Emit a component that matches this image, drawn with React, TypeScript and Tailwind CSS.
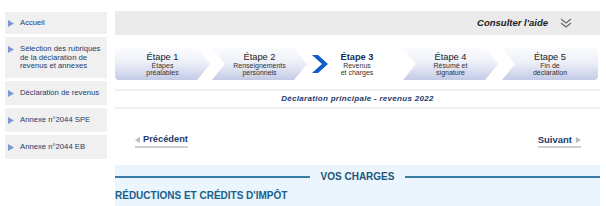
import React from 'react'

const FONT = { fontFamily: '"Liberation Sans", Arial, sans-serif' }

const MENU = [
  { lines: ['Accueil'], h: 'h-[22px]' },
  { lines: ['Sélection des rubriques', 'de la déclaration de', 'revenus et annexes'], h: 'h-[41px]' },
  { lines: ['Déclaration de revenus'], h: 'h-[24px]' },
  { lines: ['Annexe n°2044 SPE'], h: 'h-[24px]' },
  { lines: ['Annexe n°2044 EB'], h: 'h-[24px]' },
]

// step background: rounded left or notched left, pointed right or rounded right
function StepShape({ notch, point, id }: { notch?: boolean; point?: boolean; id: string }) {
  const W = 96, H = 32, d = 13
  let path = ''
  if (notch) path += `M0 0 L${d} ${H / 2} L0 ${H} `
  else path += `M4 0 Q0 0 0 4 L0 ${H - 4} Q0 ${H} 4 ${H} `
  if (point) path += `L${W - d} ${H} L${W} ${H / 2} L${W - d} 0 Z`
  else path += `L${W - 4} ${H} Q${W} ${H} ${W} ${H - 4} L${W} 4 Q${W} 0 ${W - 4} 0 Z`
  return (
    <svg className="absolute inset-0 w-full h-full" viewBox={`0 0 ${W} ${H}`} preserveAspectRatio="none">
      <defs>
        <linearGradient id={id} x1="0" y1="0" x2="0" y2="1">
          <stop offset="0" stopColor="#fbfcfe" />
          <stop offset="0.45" stopColor="#eef0f8" />
          <stop offset="1" stopColor="#c3cae6" />
        </linearGradient>
      </defs>
      <path d={path} fill={`url(#${id})`} />
    </svg>
  )
}

function Step({ n, sub, notch, point, w, className = '' }: {
  n: number; sub: string[]; notch?: boolean; point?: boolean; w: string; className?: string
}) {
  return (
    <div className={`relative h-[32px] ${w} ${className} flex flex-col items-center justify-center`}>
      <StepShape notch={notch} point={point} id={`g${n}`} />
      <span className="relative text-[9.3px] leading-[10px] text-[#222]">Étape {n}</span>
      {sub.map(s => (
        <span key={s} className="relative text-[7px] leading-[7px] text-[#333]">{s}</span>
      ))}
    </div>
  )
}

export default function App() {
  return (
    <div style={FONT} className="w-[606px] h-[206px] overflow-hidden bg-white flex">
      {/* left menu */}
      <div className="w-[107px] pl-[5px] pt-[12px] flex flex-col gap-[3px] shrink-0">
        {MENU.map(m => (
          <div key={m.lines[0]} className={`${m.h} bg-[#f0f0f0] flex pl-[2px] ${m.lines.length > 1 ? 'items-start pt-[8px]' : 'items-center'}`}>
            <svg width="6" height="7" viewBox="0 0 6 7" className="shrink-0 ml-[1px] mt-[1px]">
              <path d="M0 0 L6 3.5 L0 7 Z" fill="#7d97d3" />
            </svg>
            <div className="ml-[6px] flex flex-col whitespace-nowrap">
              {m.lines.map(l => (
                <span key={l} className="text-[7.7px] leading-[8.7px] text-[#1d3b6b]">{l}</span>
              ))}
            </div>
          </div>
        ))}
      </div>

      {/* main */}
      <div className="ml-[8px] w-[485px] pt-[11px] flex flex-col">
        <div className="h-[24px] bg-[#ebebeb] flex items-center justify-end pr-[28px]">
          <span className="text-[9.5px] font-bold italic text-[#222]">Consulter l'aide</span>
          <svg width="12" height="10" viewBox="0 0 12 10" className="ml-[12px]">
            <path d="M1 1 L6 5 L11 1 M1 5 L6 9 L11 5" fill="none" stroke="#666" strokeWidth="1.1" />
          </svg>
        </div>

        <div className="mt-[13px] flex items-center">
          <Step n={1} sub={['Étapes', 'préalables']} point w="w-[95px]" />
          <Step n={2} sub={['Renseignements', 'personnels']} notch point w="w-[95px]" className="ml-[2px]" />
          <div className="w-[96px] h-[32px] flex items-center">
            <svg width="16" height="18" viewBox="0 0 16 18" className="ml-[5px]">
              <path d="M0 0 H6 L16 9 L6 18 H0 L10 9 Z" fill="#0f5bc9" />
            </svg>
            <div className="w-[58px] flex flex-col items-center">
              <span className="text-[9.3px] leading-[10px] font-bold text-[#12305e]">Étape 3</span>
              <span className="text-[7px] leading-[7px] text-[#333]">Revenus</span>
              <span className="text-[7px] leading-[7px] text-[#333]">et charges</span>
            </div>
          </div>
          <Step n={4} sub={['Résumé et', 'signature']} notch point w="w-[95px]" />
          <Step n={5} sub={['Fin de', 'déclaration']} notch w="w-[96px]" className="ml-[4px]" />
        </div>

        <div className="mt-[9px] h-[2px] bg-[#f0f0f0]" />
        <div className="h-[16px] flex items-center justify-center">
          <span className="text-[8px] font-bold italic tracking-[0.3px] text-[#1d3b6b]">Déclaration principale - revenus 2022</span>
        </div>
        <div className="h-[2px] bg-[#f0f0f0]" />

        <div className="mt-[25px] flex justify-between pl-[20px] pr-[19px]">
          <div className="flex flex-col">
            <div className="flex items-center">
              <svg width="5" height="6" viewBox="0 0 5 6"><path d="M5 0 L0 3 L5 6 Z" fill="#bdbdbd" /></svg>
              <span className="ml-[3px] text-[9.3px] leading-[11px] font-bold text-[#1d3b6b]">Précédent</span>
            </div>
            <div className="mt-[1px] h-[2px] bg-[#cfcfcf]" />
          </div>
          <div className="flex flex-col">
            <div className="flex items-center">
              <span className="mr-[4px] text-[9.5px] leading-[11px] font-bold text-[#1d3b6b]">Suivant</span>
              <svg width="5" height="6" viewBox="0 0 5 6"><path d="M0 0 L5 3 L0 6 Z" fill="#bdbdbd" /></svg>
            </div>
            <div className="mt-[1px] h-[2px] bg-[#cfcfcf]" />
          </div>
        </div>

        <div className="mt-[17px] flex-1 bg-[#eaf5fd] flex flex-col">
          <div className="mt-[4px] flex items-center">
            <div className="flex-1 h-[2px] bg-[#3a7ca5]" />
            <span className="px-[11px] text-[10px] font-bold text-[#1f5577]">VOS CHARGES</span>
            <div className="flex-1 h-[2px] bg-[#3a7ca5]" />
          </div>
          <div className="mt-[4px] text-[10px] font-bold text-[#1a5e8c]">RÉDUCTIONS ET CRÉDITS D'IMPÔT</div>
        </div>
      </div>
    </div>
  )
}
